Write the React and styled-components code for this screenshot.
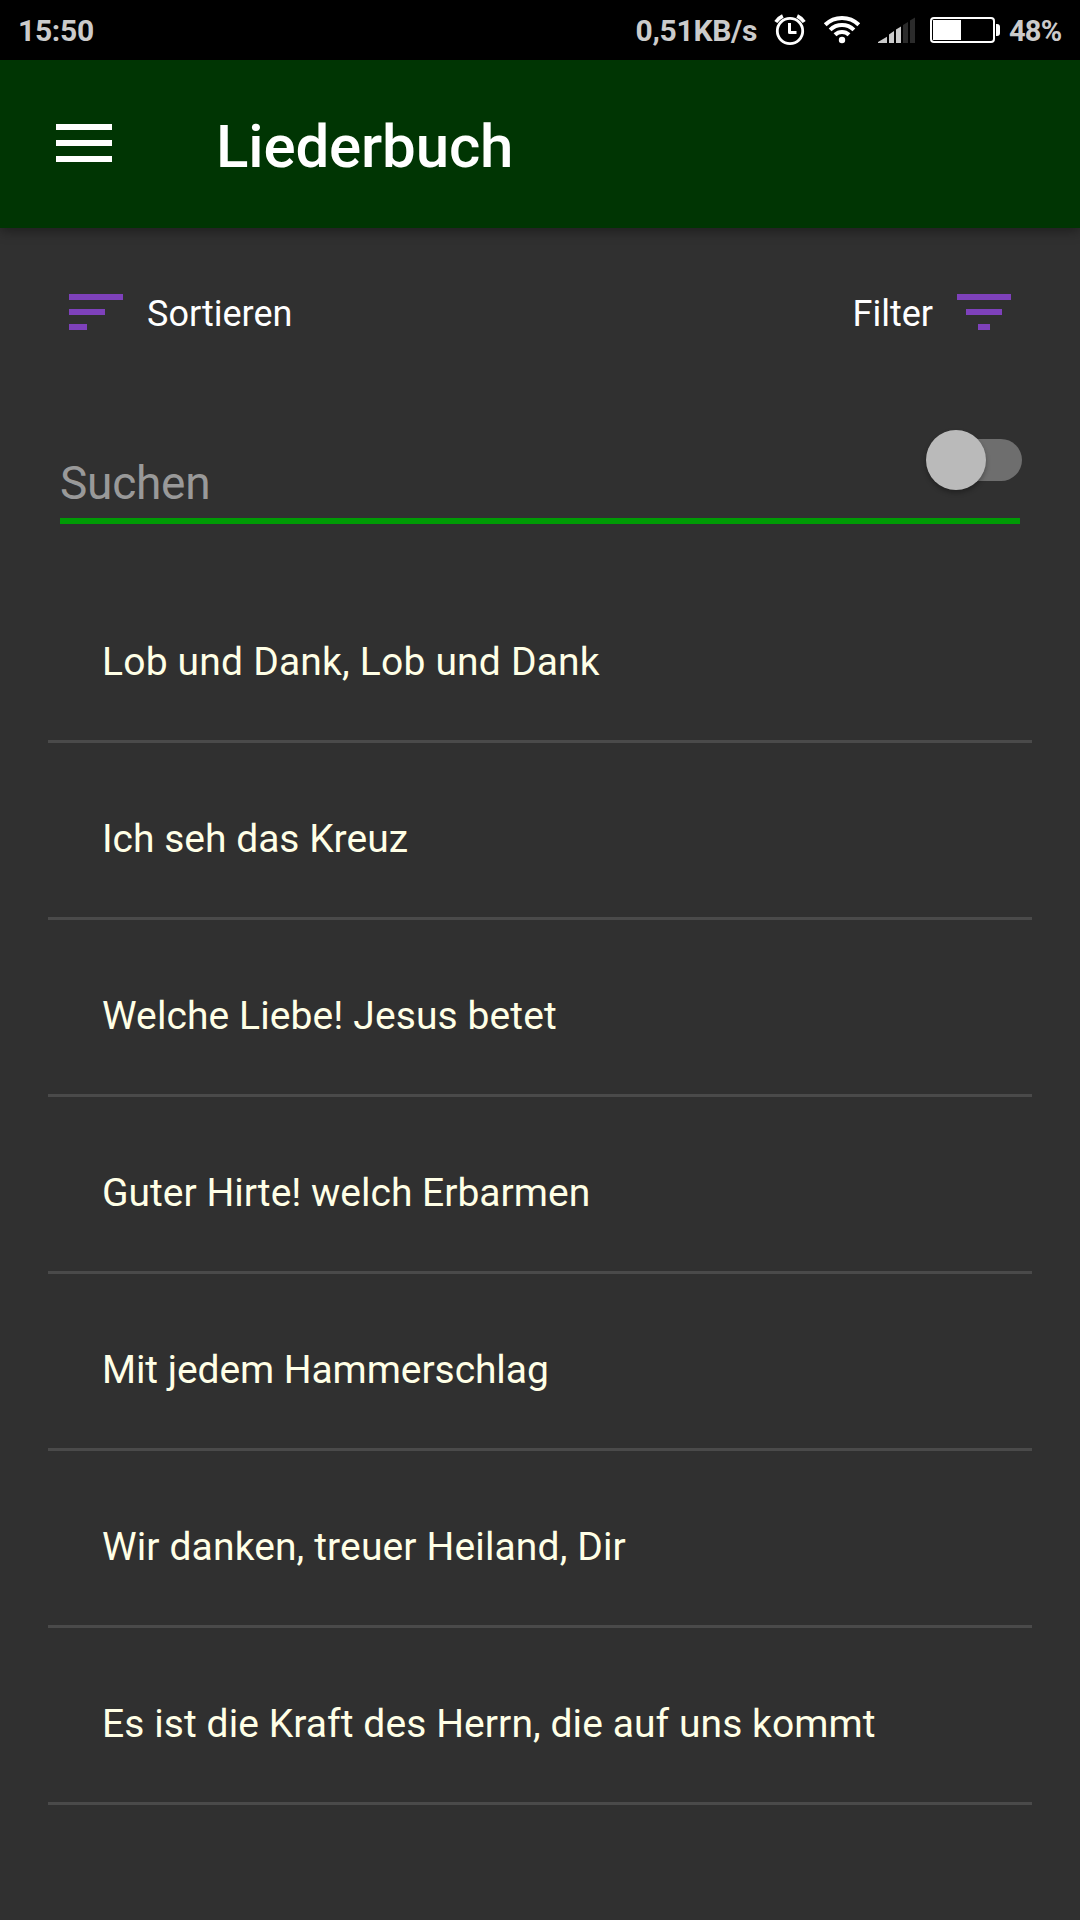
import React, { useState } from 'react';
import styled, { createGlobalStyle } from 'styled-components';

const GlobalStyle = createGlobalStyle`
  * {
    box-sizing: border-box;
  }

  body {
    margin: 0;
    background: #303030;
    font-family: Roboto, "Liberation Sans", sans-serif;
  }
`;

const Screen = styled.div`
  display: flex;
  flex-direction: column;
  width: 1080px;
  height: 1920px;
  overflow: hidden;
  background: #303030;
`;

const StatusBar = styled.div`
  display: flex;
  align-items: center;
  height: 60px;
  padding: 0 18px 0 18px;
  background: #000;
  color: #cbcbcb;
`;

const StatusText = styled.span`
  padding-top: 1px;
  font-size: ${(props) => props.$size || 30}px;
  line-height: 60px;
  font-weight: 700;
  letter-spacing: ${(props) => props.$tracking || -0.3}px;
  white-space: nowrap;
`;

const StatusIcons = styled.div`
  display: flex;
  align-items: center;
  gap: 17px;
  margin-left: auto;
`;

const StatusIcon = styled.svg`
  display: block;
  flex: none;
  height: 60px;
`;

const BatteryLevel = styled.div`
  display: flex;
  align-items: center;
  gap: 9px;
  width: 132px;
  margin-left: -2px;
`;

const AppBar = styled.header`
  display: flex;
  flex: none;
  align-items: flex-start;
  height: 168px;
  padding: 0 56px;
  background: #003503;
  box-shadow: 0 2px 12px rgba(0, 0, 0, 0.45);
`;

const MenuButton = styled.button`
  display: flex;
  flex-direction: column;
  gap: 10px;
  width: 56px;
  margin: 64px 104px 0 0;
  padding: 0;
  border: 0;
  background: none;
  cursor: pointer;
`;

const MenuLine = styled.span`
  height: 6px;
  background: #fff;
`;

const Title = styled.h1`
  margin: 52px 0 0;
  color: #fff;
  font-size: 60px;
  line-height: 70px;
  font-weight: 500;
  letter-spacing: -0.15px;
`;

const Toolbar = styled.div`
  display: flex;
  justify-content: space-between;
  align-items: flex-start;
  padding: 66px 69px 0;
`;

const ToolButton = styled.button`
  display: flex;
  align-items: flex-start;
  gap: 24px;
  height: 42px;
  padding: 0;
  border: 0;
  background: none;
  color: #fff;
  font-family: inherit;
  font-size: 36px;
  line-height: 40px;
  cursor: pointer;
`;

const Bars = styled.span`
  display: flex;
  flex-direction: column;
  align-items: ${(props) => (props.$centered ? 'center' : 'flex-start')};
  gap: 9px;
  width: 54px;
`;

const Bar = styled.span`
  width: ${(props) => props.$width}px;
  height: 6px;
  background: #7e41bb;
`;

const SearchRow = styled.div`
  display: flex;
  justify-content: space-between;
  align-items: flex-start;
  height: 98px;
  margin: 90px 60px 0;
  border-bottom: 6px solid #009a05;
`;

const SearchInput = styled.input`
  width: 780px;
  height: 56px;
  margin-top: 29px;
  padding: 0;
  border: 0;
  outline: 0;
  background: none;
  color: #fff;
  font-family: inherit;
  font-size: 46px;
  letter-spacing: -0.25px;

  &::placeholder {
    color: #999;
    opacity: 1;
  }
`;

const Switch = styled.button`
  display: flex;
  align-items: center;
  flex: none;
  width: 92px;
  height: 42px;
  margin: 13px -2px 0 0;
  padding: 0;
  border: 0;
  border-radius: 21px;
  background: #6e6e6e;
  cursor: pointer;
`;

const Thumb = styled.span`
  flex: none;
  width: 60px;
  height: 60px;
  margin: 0.6px 0 0 ${(props) => (props.$on ? 35 : -3.6)}px;
  border-radius: 50%;
  background: #bababa;
  box-shadow: 0 3px 5px rgba(0, 0, 0, 0.3);
`;

const SongList = styled.ul`
  margin: 42px 48px 0;
  padding: 0;
  list-style: none;
`;

const SongItem = styled.li`
  height: 177px;
  padding: 73px 54px 0;
  border-bottom: 3px solid #4a4a4a;
  color: #ffffe6;
  font-size: 39px;
  line-height: 46px;
  letter-spacing: ${(props) => props.$tracking}px;
  cursor: pointer;
`;

const songs = [
  { title: 'Lob und Dank, Lob und Dank', tracking: 0.2 },
  { title: 'Ich seh das Kreuz', tracking: 0 },
  { title: 'Welche Liebe! Jesus betet', tracking: 0.1 },
  { title: 'Guter Hirte! welch Erbarmen', tracking: 0 },
  { title: 'Mit jedem Hammerschlag', tracking: -0.08 },
  { title: 'Wir danken, treuer Heiland, Dir', tracking: 0.13 },
  { title: 'Es ist die Kraft des Herrn, die auf uns kommt', tracking: 0.08 },
];

const AlarmIcon = () => (
  <StatusIcon width="32" viewBox="0 0 32 60" fill="none" stroke="#fff">
    <circle cx="16" cy="31" r="12.7" strokeWidth="2.8" />
    <path d="M15.5 23V32.5H22.5" strokeWidth="3" strokeLinejoin="round" />
    <path d="M1.8 22Q4.5 18 8.8 16M30.2 22Q27.5 18 23.2 16" strokeWidth="3.6" />
  </StatusIcon>
);

const WifiIcon = () => (
  <StatusIcon width="38" viewBox="0 0 38 60" fill="none" stroke="#fff" strokeWidth="4">
    <path d="M2.2 24.8A24 24 0 0 1 35.8 24.8" />
    <path d="M7.1 29.9A17 17 0 0 1 30.9 29.9" />
    <path d="M12 34.8A10 10 0 0 1 26 34.8" />
    <circle cx="19" cy="40" r="3.2" fill="#fff" stroke="none" />
  </StatusIcon>
);

const SignalIcon = () => (
  <StatusIcon width="37" viewBox="0 0 37 60" fill="#cbcbcb">
    <path d="M0 43V42L9 36.8V43Z" />
    <path d="M11 43V34.5L16 31V43Z" />
    <path d="M18 43V29.5L23 26.5V43Z" />
    <path d="M25 43V25L30 22V43Z" fill="#2b2b2b" />
    <path d="M32 43V20.5L37 17.5V43Z" fill="#2b2b2b" />
  </StatusIcon>
);

const BatteryIcon = () => (
  <StatusIcon width="70" viewBox="0 0 70 60">
    <rect x="1" y="18" width="63" height="24" rx="3" fill="none" stroke="#fff" strokeWidth="2" />
    <rect x="3" y="20" width="28" height="20" fill="#fff" />
    <path d="M66 24H67Q70 24 70 27V33Q70 36 67 36H66Z" fill="#fff" />
  </StatusIcon>
);

const App = () => {
  const [search, setSearch] = useState('');
  const [fullText, setFullText] = useState(false);

  return (
    <Screen>
      <GlobalStyle />
      <StatusBar>
        <StatusText>15:50</StatusText>
        <StatusIcons>
          <StatusText>0,51KB/s</StatusText>
          <AlarmIcon />
          <WifiIcon />
          <SignalIcon />
          <BatteryLevel>
            <BatteryIcon />
            <StatusText $size={29} $tracking={-0.8}>48%</StatusText>
          </BatteryLevel>
        </StatusIcons>
      </StatusBar>
      <AppBar>
        <MenuButton aria-label="Menü">
          <MenuLine />
          <MenuLine />
          <MenuLine />
        </MenuButton>
        <Title>Liederbuch</Title>
      </AppBar>
      <Toolbar>
        <ToolButton>
          <Bars>
            <Bar $width={54} />
            <Bar $width={36} />
            <Bar $width={18} />
          </Bars>
          Sortieren
        </ToolButton>
        <ToolButton>
          Filter
          <Bars $centered>
            <Bar $width={54} />
            <Bar $width={36} />
            <Bar $width={12} />
          </Bars>
        </ToolButton>
      </Toolbar>
      <SearchRow>
        <SearchInput
          placeholder="Suchen"
          value={search}
          onChange={(e) => setSearch(e.target.value)}
        />
        <Switch role="switch" aria-checked={fullText} onClick={() => setFullText(!fullText)}>
          <Thumb $on={fullText} />
        </Switch>
      </SearchRow>
      <SongList>
        {songs
          .filter(({ title }) => title.toLowerCase().includes(search.toLowerCase()))
          .map(({ title, tracking }) => (
            <SongItem key={title} $tracking={tracking}>
              {title}
            </SongItem>
          ))}
      </SongList>
    </Screen>
  );
};

export default App;
